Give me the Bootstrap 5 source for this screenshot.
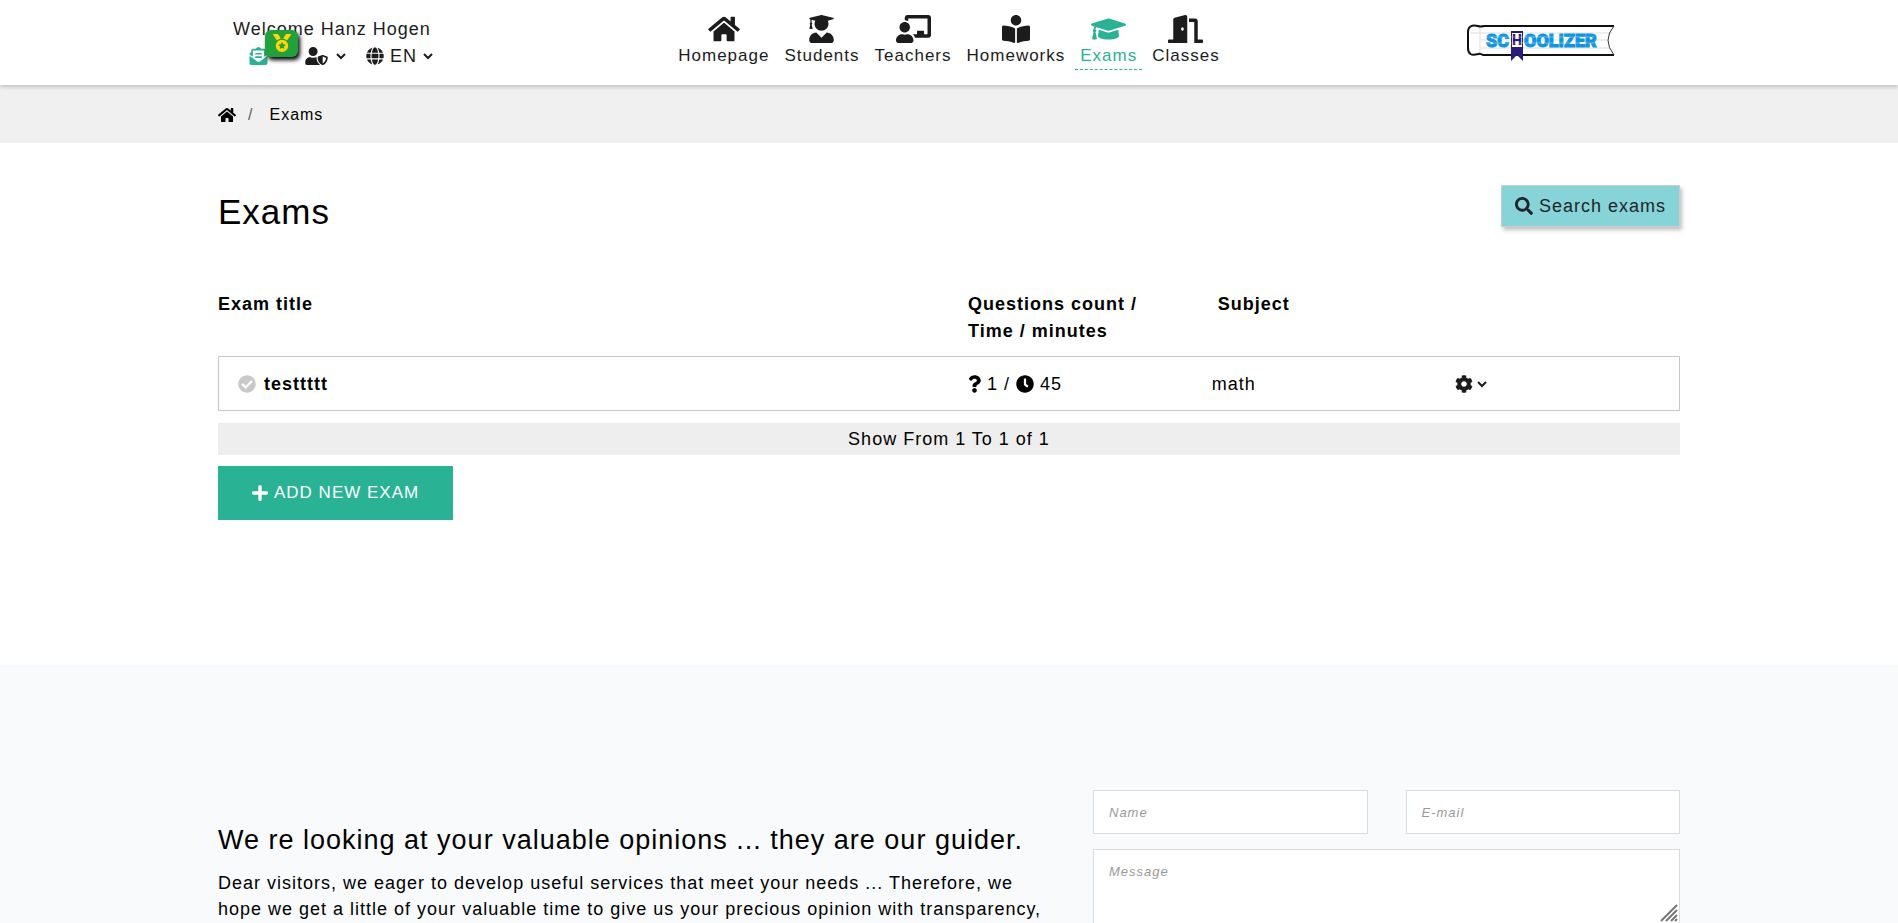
<!DOCTYPE html>
<html lang="en">
<head>
<meta charset="utf-8">
<meta name="viewport" content="width=device-width, initial-scale=1">
<title>Exams - Schoolizer</title>
<link href="https://cdn.jsdelivr.net/npm/bootstrap@5.3.0/dist/css/bootstrap.min.css" rel="stylesheet">
<style>
  :root { --brand: #29b294; --ink: #1c1c1c; }
  body { font-family: "Liberation Sans", Arial, sans-serif; font-size: 18px; line-height: 26px; letter-spacing: 1px; color: #000; background: #fff; }
  a { color: inherit; text-decoration: none; }
  .site-wrap { max-width: 1500px; padding-left: 19px; padding-right: 19px; }
  .row { --bs-gutter-x: 38px; }
  .ico { fill: currentColor; flex: none; display: block; }
  .icon-gap { gap: 6px; }
  .site-header { min-height: 85px; box-shadow: 0 2px 4px rgba(0,0,0,.2); color: var(--ink); position: relative; z-index: 2; }
  .user-box { padding: 16px 0 0 15px; }
  .tool-btn { background: none; border: 0; padding: 0; color: var(--ink); letter-spacing: inherit; height: 27px; }
  .mail-link { color: var(--brand); margin-right: 37px; }
  .medal-badge { top: -17px; left: 16px; width: 33px; height: 27px; border-radius: 6px; background: #22a03a; color: #ffd60a; box-shadow: 2px 3px 4px #000; }
  .main-nav { gap: 5px; padding-top: 15px; font-size: 17px; line-height: 26px; }
  .main-nav .nav-link { padding: 0 5px; color: var(--ink); border-bottom: 1px dashed transparent; }
  .main-nav .nav-link.active { color: var(--brand); border-color: var(--brand); }
  .logo-link { padding-right: 65px; padding-top: 23px; }
  .crumb-bar { background: #f0f0f0; padding: 17px 0 15px; font-size: 16px; }
  .crumb-bar .breadcrumb-item + .breadcrumb-item { padding-left: 12px; }
  .crumb-bar .breadcrumb-item + .breadcrumb-item::before { padding-right: 16px; }
  .page-title { font-size: 35px; line-height: 54px; }
  .search-btn { background: #87d4d8; border: 1px solid #ccc; border-radius: 0; height: 42px; padding: 0 13px; font-size: 18px; letter-spacing: inherit; box-shadow: 2px 3px 4px rgba(0,0,0,.25); }
  .exam-table { table-layout: fixed; border-collapse: separate; border-spacing: 0; margin: 52px 0 12px; }
  .exam-table th { padding: 0 0 11px; line-height: 27px; vertical-align: top; }
  .exam-table .subject-head { padding-left: 6px; }
  .exam-table td { height: 55px; border: solid #c8c8c8; border-width: 1px 0; vertical-align: middle; padding: 0; }
  .exam-table td:first-child { border-left-width: 1px; padding-left: 19px; }
  .exam-table td:last-child { border-right-width: 1px; }
  .c-title { width: 51.3%; } .c-count, .c-subject { width: 16.67%; }
  .pager-note { background: #eee; height: 32px; line-height: 32px; margin-bottom: 11px; }
  .add-btn { background: var(--brand); color: #fff; height: 54px; padding: 0 33px; border-radius: 0; font-size: 17px; letter-spacing: inherit; }
  .exam-section { padding: 42px 0 145px; }
  .feedback { background: #f8fafc; padding-top: 125px; }
  .feedback-copy { padding-top: 32px; }
  .feedback-title { font-size: 27px; line-height: 36px; margin-bottom: 12px; }
  .feedback .form-control { border: 1px solid #d8dbdf; border-radius: 0; background: #fff; font-size: 13px; line-height: 20px; height: 44px; padding: 12px 15px; letter-spacing: inherit; }
  .feedback textarea.form-control { height: 75px; resize: none; display: block; }
  .feedback .form-control::placeholder { color: #999; font-style: italic; opacity: 1; }
  .field-row { margin-bottom: 15px; }
  .grip { right: 2px; bottom: 2px; }
</style>
</head>
<body>
<svg class="d-none" aria-hidden="true">
  <symbol id="i-home" viewBox="0 0 576 512"><path d="M280.37 148.26L96 300.11V464a16 16 0 0 0 16 16l112.06-.29a16 16 0 0 0 15.92-16V368a16 16 0 0 1 16-16h64a16 16 0 0 1 16 16v95.64a16 16 0 0 0 16 16.05L464 480a16 16 0 0 0 16-16V300L295.67 148.26a12.19 12.19 0 0 0-15.3 0zM571.6 251.47L488 182.56V44.05a12 12 0 0 0-12-12h-56a12 12 0 0 0-12 12v72.61L318.47 43a48 48 0 0 0-61 0L4.34 251.47a12 12 0 0 0-1.6 16.9l25.5 31A12 12 0 0 0 45.15 301l235.22-193.74a12.19 12.19 0 0 1 15.3 0L530.9 301a12 12 0 0 0 16.9-1.6l25.5-31a12 12 0 0 0-1.7-16.93z"/></symbol>
  <symbol id="i-student" viewBox="0 0 448 512"><path d="M319.4 320.6L224 416l-95.4-95.4C57.1 323.7 0 382.2 0 454.4v9.6c0 26.5 21.5 48 48 48h352c26.5 0 48-21.5 48-48v-9.6c0-72.2-57.1-130.7-128.6-133.8zM13.6 79.8l6.4 1.5v58.4c-7 4.2-12 11.5-12 20.3 0 8.4 4.6 15.4 11.1 19.7L3.5 242c-1.7 6.9 2.1 14 7.6 14h41.8c5.5 0 9.3-7.1 7.6-14l-15.6-62.3C51.4 175.4 56 168.4 56 160c0-8.8-5-16.1-12-20.3V87.1l66 15.9c-8.6 17.2-14 36.4-14 57 0 70.7 57.3 128 128 128s128-57.3 128-128c0-20.6-5.3-39.8-14-57l96.3-23.2c18.2-4.4 18.2-27.1 0-31.5l-190.4-46c-13-3.1-26.7-3.1-39.7 0L13.6 48.2c-18.1 4.4-18.1 27.2 0 31.6z"/></symbol>
  <symbol id="i-teacher" viewBox="0 0 640 512"><path d="M208 352c-2.39 0-4.78.35-7.06 1.09C187.98 357.3 174.35 360 160 360c-14.35 0-27.98-2.7-40.95-6.91-2.28-.74-4.66-1.09-7.05-1.09C49.94 352-.33 402.48 0 464.62.14 490.88 21.73 512 48 512h224c26.27 0 47.86-21.12 48-47.38.33-62.14-49.94-112.62-112-112.62zm-48-32c53.02 0 96-42.98 96-96s-42.98-96-96-96-96 42.98-96 96 42.98 96 96 96zM592 0H208c-26.47 0-48 22.25-48 49.59V96c23.42 0 45.1 6.78 64 17.8V64h352v288h-64v-64H384v64h-76.24c19.1 16.69 33.12 38.73 39.69 64H592c26.47 0 48-22.25 48-49.59V49.59C640 22.25 618.47 0 592 0z"/></symbol>
  <symbol id="i-reader" viewBox="0 0 512 512"><path d="M352 96c0-53.02-42.98-96-96-96s-96 42.98-96 96 42.98 96 96 96 96-42.98 96-96zM233.59 241.1c-59.33-36.32-155.43-46.3-203.79-49.05C13.55 191.13 0 203.51 0 219.14v222.8c0 14.33 11.59 26.28 26.49 27.05 43.66 2.29 131.99 10.68 193.04 41.43 9.37 4.72 20.48-1.71 20.48-11.87V252.56c-.01-4.67-2.32-8.95-6.42-11.46zm248.61-49.05c-48.35 2.74-144.46 12.73-203.78 49.05-4.1 2.51-6.41 6.96-6.41 11.63v245.79c0 10.19 11.14 16.63 20.54 11.9 61.04-30.72 149.32-39.11 192.97-41.4 14.9-.78 26.49-12.73 26.49-27.06V219.14c-.01-15.63-13.56-28.01-29.81-27.09z"/></symbol>
  <symbol id="i-cap" viewBox="0 0 640 512"><path d="M622.34 153.2L343.4 67.5c-15.2-4.67-31.6-4.67-46.79 0L17.66 153.2c-23.54 7.23-23.54 38.36 0 45.59l48.63 14.94c-10.67 13.19-17.23 29.28-17.88 46.9C38.78 266.15 32 276.11 32 288c0 10.78 5.68 19.85 13.86 25.65L20.33 428.53C18.11 438.52 25.71 448 35.94 448h56.11c10.24 0 17.84-9.48 15.62-19.47L82.14 313.65C90.32 307.85 96 298.78 96 288c0-11.57-6.47-21.25-15.66-26.87.76-15.02 8.44-28.3 20.69-36.72L296.6 284.5c9.06 2.78 26.44 6.25 46.79 0l278.95-85.7c23.55-7.24 23.55-38.36 0-45.6zM352.79 315.09c-28.53 8.76-52.84 3.92-65.59 0l-145.02-44.55L128 384c0 35.35 85.96 64 192 64s192-28.65 192-64l-14.18-113.47-145.03 44.56z"/></symbol>
  <symbol id="i-door" viewBox="0 0 640 512"><path d="M624 448h-80V113.45C544 86.19 522.47 64 496 64H384v64h96v384h144c8.84 0 16-7.16 16-16v-32c0-8.84-7.16-16-16-16zM312.24 1.01l-192 49.74C105.99 54.44 96 67.7 96 82.92V448H16c-8.84 0-16 7.16-16 16v32c0 8.84 7.16 16 16 16h336V33.18c0-21.58-19.56-37.41-39.76-32.17zM264 288c-13.25 0-24-14.33-24-32s10.75-32 24-32 24 14.33 24 32-10.75 32-24 32z"/></symbol>
  <symbol id="i-mail" viewBox="0 0 512 512"><path d="M176 216h160c8.84 0 16-7.16 16-16v-16c0-8.84-7.16-16-16-16H176c-8.84 0-16 7.16-16 16v16c0 8.84 7.16 16 16 16zm-16 80c0 8.84 7.16 16 16 16h160c8.84 0 16-7.16 16-16v-16c0-8.84-7.16-16-16-16H176c-8.84 0-16 7.16-16 16v16zm96 121.13c-16.42 0-32.84-5.06-46.86-15.19L0 250.86V464c0 26.51 21.49 48 48 48h416c26.51 0 48-21.49 48-48V250.86L302.86 401.94c-14.02 10.12-30.44 15.19-46.86 15.19zm237.61-254.18c-8.85-6.94-17.24-13.47-29.61-22.81V96c0-26.51-21.49-48-48-48h-77.55c-3.04-2.2-5.87-4.26-9.04-6.56C312.6 29.17 279.2-.35 256 0c-23.2-.35-56.59 29.17-73.41 41.44-3.17 2.3-6 4.36-9.04 6.56H96c-26.51 0-48 21.49-48 48v44.14c-12.37 9.33-20.76 15.87-29.61 22.81A47.995 47.995 0 0 0 0 200.72v10.65l96 69.35V96h320v184.72l96-69.35v-10.65c0-14.74-6.78-28.67-18.39-37.77z"/></symbol>
  <symbol id="i-shield" viewBox="0 0 640 512"><path d="M622.3 271.1l-115.2-45c-4.1-1.6-12.6-3.7-22.2 0l-115.2 45c-10.7 4.2-17.7 14-17.7 24.9 0 111.6 68.7 188.8 132.9 213.9 9.6 3.7 18 1.6 22.2 0C558.4 489.9 640 420.5 640 296c0-10.9-7-20.7-17.7-24.9zM496 462.4V273.3l95.5 37.3c-5.6 87.1-60.9 135.4-95.5 151.8zM224 256c70.7 0 128-57.3 128-128S294.7 0 224 0 96 57.3 96 128s57.3 128 128 128zm96 40c0-2.5.8-4.8 1.1-7.2-2.5-.1-4.9-.8-7.5-.8h-16.7c-22.2 10.2-46.9 16-72.9 16s-50.6-5.8-72.9-16h-16.7C60.2 288 0 348.2 0 422.4V464c0 26.5 21.5 48 48 48h352c6.8 0 13.3-1.5 19.2-4-54-42.9-99.2-116.7-99.2-212z"/></symbol>
  <symbol id="i-globe" viewBox="0 0 496 512"><path d="M336.5 160C322 70.7 287.8 8 248 8s-74 62.7-88.5 152h177zM152 256c0 22.2 1.2 43.5 3.3 64h185.3c2.1-20.5 3.3-41.8 3.3-64s-1.2-43.5-3.3-64H155.3c-2.1 20.5-3.3 41.8-3.3 64zm324.7-96c-28.6-67.9-86.5-120.4-158-141.6 24.4 33.8 41.2 84.7 50 141.6h108zM177.2 18.4C105.8 39.6 47.8 92.1 19.3 160h108c8.7-56.9 25.5-107.8 49.9-141.6zM487.4 192H372.7c2.1 21 3.3 42.5 3.3 64s-1.2 43-3.3 64h114.6c5.5-20.5 8.6-41.8 8.6-64s-3.1-43.5-8.5-64zM120 256c0-21.5 1.2-43 3.3-64H8.6C3.2 212.5 0 233.8 0 256s3.2 43.5 8.6 64h114.6c-2-21-3.2-42.5-3.2-64zm39.5 96c14.5 89.3 48.7 152 88.5 152s74-62.7 88.5-152h-177zm159.3 141.6c71.4-21.2 129.4-73.7 158-141.6h-108c-8.8 56.9-25.6 107.8-50 141.6zM19.3 352c28.6 67.9 86.5 120.4 158 141.6-24.4-33.8-41.2-84.7-50-141.6h-108z"/></symbol>
  <symbol id="i-medal" viewBox="0 0 512 512"><path d="M223.75 130.75L154.62 15.54A31.997 31.997 0 0 0 127.18 0H16.03C3.08 0-4.5 14.57 2.92 25.18l111.27 158.96c29.72-27.77 67.52-46.83 109.56-53.39zM495.97 0H384.82c-11.24 0-21.66 5.9-27.44 15.54l-69.13 115.21c42.04 6.56 79.84 25.62 109.56 53.38L509.08 25.18C516.5 14.57 508.92 0 495.97 0zM256 160c-97.2 0-176 78.8-176 176s78.8 176 176 176 176-78.8 176-176-78.8-176-176-176zm92.52 157.26l-37.93 36.96 8.97 52.22c1.6 9.36-8.26 16.51-16.65 12.09L256 393.88l-46.9 24.65c-8.4 4.45-18.25-2.74-16.65-12.09l8.97-52.22-37.93-36.96c-6.82-6.64-3.05-18.23 6.35-19.59l52.43-7.64 23.43-47.52c2.11-4.28 6.19-6.39 10.28-6.39 4.11 0 8.22 2.14 10.33 6.39l23.43 47.52 52.43 7.64c9.4 1.36 13.17 12.95 6.35 19.59z"/></symbol>
  <symbol id="i-search" viewBox="0 0 512 512"><path d="M505 442.7L405.3 343c-4.5-4.5-10.6-7-17-7H372c27.6-35.3 44-79.7 44-128C416 93.1 322.9 0 208 0S0 93.1 0 208s93.1 208 208 208c48.3 0 92.7-16.4 128-44v16.3c0 6.4 2.5 12.5 7 17l99.7 99.7c9.4 9.4 24.6 9.4 33.9 0l28.3-28.3c9.4-9.4 9.4-24.6.1-34zM208 336c-70.7 0-128-57.2-128-128 0-70.7 57.2-128 128-128 70.7 0 128 57.2 128 128 0 70.7-57.2 128-128 128z"/></symbol>
  <symbol id="i-check" viewBox="0 0 512 512"><path d="M504 256c0 136.967-111.033 248-248 248S8 392.967 8 256 119.033 8 256 8s248 111.033 248 248zM227.314 387.314l184-184c6.248-6.248 6.248-16.379 0-22.627l-22.627-22.627c-6.248-6.249-16.379-6.249-22.628 0L216 308.118l-70.059-70.059c-6.248-6.248-16.379-6.248-22.628 0l-22.627 22.627c-6.248 6.248-6.248 16.379 0 22.627l104 104c6.249 6.249 16.379 6.249 22.628.001z"/></symbol>
  <symbol id="i-question" viewBox="0 0 384 512"><path d="M202.021 0C122.202 0 70.503 32.703 29.914 91.026c-7.363 10.58-5.093 25.086 5.178 32.874l43.138 32.709c10.373 7.865 25.132 6.026 33.253-4.148 25.049-31.381 43.63-49.449 82.757-49.449 30.764 0 68.816 19.799 68.816 49.631 0 22.552-18.617 34.134-48.993 51.164-35.423 19.86-82.299 44.576-82.299 106.405V320c0 13.255 10.745 24 24 24h72.471c13.255 0 24-10.745 24-24v-5.773c0-42.86 125.268-44.645 125.268-160.627C377.504 66.256 286.902 0 202.021 0zM192 373.459c-38.196 0-69.271 31.075-69.271 69.271 0 38.195 31.075 69.27 69.271 69.27s69.271-31.075 69.271-69.271-31.075-69.27-69.271-69.27z"/></symbol>
  <symbol id="i-clock" viewBox="0 0 512 512"><path d="M256,8C119,8,8,119,8,256S119,504,256,504,504,393,504,256,393,8,256,8Zm92.49,313h0l-20,25a16,16,0,0,1-22.49,2.5h0l-67-49.72a40,40,0,0,1-15-31.23V112a16,16,0,0,1,16-16h32a16,16,0,0,1,16,16V256l58,42.5A16,16,0,0,1,348.49,321Z"/></symbol>
  <symbol id="i-cog" viewBox="0 0 512 512"><path d="M487.4 315.7l-42.6-24.6c4.3-23.2 4.3-47 0-70.2l42.6-24.6c4.9-2.8 7.1-8.6 5.5-14-11.1-35.6-30-67.8-54.7-94.6-3.8-4.1-10-5.1-14.8-2.3L380.8 110c-17.9-15.4-38.5-27.3-60.8-35.1V25.8c0-5.6-3.9-10.5-9.4-11.7-36.7-8.2-74.3-7.8-109.2 0-5.5 1.2-9.4 6.1-9.4 11.7V75c-22.2 7.9-42.8 19.8-60.8 35.1L88.7 85.5c-4.9-2.8-11-1.9-14.8 2.3-24.7 26.7-43.6 58.9-54.7 94.6-1.7 5.4.6 11.2 5.5 14L67.3 221c-4.3 23.2-4.3 47 0 70.2l-42.6 24.6c-4.9 2.8-7.1 8.6-5.5 14 11.1 35.6 30 67.8 54.7 94.6 3.8 4.1 10 5.1 14.8 2.3l42.6-24.6c17.9 15.4 38.5 27.3 60.8 35.1v49.2c0 5.6 3.9 10.5 9.4 11.7 36.7 8.2 74.3 7.8 109.2 0 5.5-1.2 9.4-6.1 9.4-11.7v-49.2c22.2-7.9 42.8-19.8 60.8-35.1l42.6 24.6c4.9 2.8 11 1.9 14.8-2.3 24.7-26.7 43.6-58.9 54.7-94.6 1.5-5.5-.7-11.3-5.6-14.1zM256 336c-44.1 0-80-35.9-80-80s35.9-80 80-80 80 35.9 80 80-35.9 80-80 80z"/></symbol>
  <symbol id="i-plus" viewBox="0 0 448 512"><path d="M416 208H272V64c0-17.67-14.33-32-32-32h-32c-17.67 0-32 14.33-32 32v144H32c-17.67 0-32 14.33-32 32v32c0 17.67 14.33 32 32 32h144v144c0 17.67 14.33 32 32 32h32c17.67 0 32-14.33 32-32V304h144c17.67 0 32-14.33 32-32v-32c0-17.67-14.33-32-32-32z"/></symbol>
  <symbol id="i-chev" viewBox="0 0 10 8"><path d="M1 2l4 4 4-4" fill="none" stroke="currentColor" stroke-width="2"/></symbol>
</svg>

<header class="site-header bg-white">
  <div class="container-fluid site-wrap">
    <div class="row">
      <div class="col-lg-3">
        <div class="user-box">
          <div>Welcome Hanz Hogen</div>
          <div class="d-flex align-items-center ps-3">
            <a href="#" class="mail-link position-relative" aria-label="Messages">
              <svg class="ico" width="19" height="18"><use href="#i-mail"/></svg>
              <span class="medal-badge position-absolute d-flex align-items-center justify-content-center"><svg class="ico" width="18" height="18"><use href="#i-medal"/></svg></span>
            </a>
            <button type="button" class="tool-btn d-flex align-items-center gap-2" aria-label="Account">
              <svg class="ico" width="23" height="18"><use href="#i-shield"/></svg>
              <svg class="ico" width="10" height="8"><use href="#i-chev"/></svg>
            </button>
            <button type="button" class="tool-btn d-flex align-items-center icon-gap ms-3 ps-1" aria-label="Language">
              <svg class="ico" width="18" height="18"><use href="#i-globe"/></svg>
              <span>EN</span>
              <svg class="ico" width="10" height="8"><use href="#i-chev"/></svg>
            </button>
          </div>
        </div>
      </div>
      <div class="col-lg-6">
        <nav class="nav main-nav justify-content-center flex-lg-nowrap">
          <a class="nav-link d-flex flex-column align-items-center" href="#"><svg class="ico" width="32" height="28"><use href="#i-home"/></svg>Homepage</a>
          <a class="nav-link d-flex flex-column align-items-center" href="#"><svg class="ico" width="25" height="28"><use href="#i-student"/></svg>Students</a>
          <a class="nav-link d-flex flex-column align-items-center" href="#"><svg class="ico" width="35" height="28"><use href="#i-teacher"/></svg>Teachers</a>
          <a class="nav-link d-flex flex-column align-items-center" href="#"><svg class="ico" width="28" height="28"><use href="#i-reader"/></svg>Homeworks</a>
          <a class="nav-link active d-flex flex-column align-items-center" href="#" aria-current="page"><svg class="ico" width="35" height="28"><use href="#i-cap"/></svg>Exams</a>
          <a class="nav-link d-flex flex-column align-items-center" href="#"><svg class="ico" width="35" height="28"><use href="#i-door"/></svg>Classes</a>
        </nav>
      </div>
      <div class="col-lg-3">
        <a class="logo-link d-flex justify-content-end" href="#" aria-label="Schoolizer">
          <svg width="148" height="40" viewBox="0 0 148 40">
            <path d="M12 3H147Q135 17 147 32H12" fill="#fff"/>
            <path d="M3 10H145M14 17H141M14 25H143M13 4V31" stroke="#ddd" fill="none"/>
            <path d="M147 3H17Q13 4 11 3Q1 1 1 9V25Q1 34 11 31Q13 30 16 32H147" fill="none" stroke="#111" stroke-width="2"/>
            <path d="M147 3Q135 17 147 32" fill="none" stroke="#333"/>
            <g font-family="Roboto, sans-serif" font-weight="900" letter-spacing="0" fill="#1095df">
              <text x="19" y="24" font-size="18" stroke="#1095df">SC</text>
              <path d="M44 8H56V38L50 32L44 38Z" fill="#2a1a7a"/>
              <path d="M45 10H55V24H45Z" fill="#fff"/>
              <text x="50" y="22" font-size="14" text-anchor="middle" fill="#2a1a7a">H</text>
              <text x="57" y="24" font-size="18" stroke="#1095df">OOLIZER</text>
            </g>
            <path d="M19 14H127M19 20H127" stroke="#fff" stroke-opacity=".35"/>
          </svg>
        </a>
      </div>
    </div>
  </div>
</header>

<div class="crumb-bar">
  <nav class="container-fluid site-wrap" aria-label="breadcrumb">
    <ol class="breadcrumb align-items-center mb-0">
      <li class="breadcrumb-item"><a href="#" aria-label="Home"><svg class="ico" width="18" height="16"><use href="#i-home"/></svg></a></li>
      <li class="breadcrumb-item">Exams</li>
    </ol>
  </nav>
</div>

<main class="exam-section">
  <div class="container-fluid site-wrap">
    <div class="d-flex justify-content-between align-items-start">
      <h1 class="page-title fw-normal mb-0">Exams</h1>
      <button type="button" class="btn search-btn d-flex align-items-center icon-gap"><svg class="ico" width="18" height="18"><use href="#i-search"/></svg>Search exams</button>
    </div>
    <table class="exam-table w-100">
      <colgroup><col class="c-title"><col class="c-count"><col class="c-subject"><col></colgroup>
      <thead>
        <tr><th scope="col">Exam title</th><th scope="col">Questions count /<br>Time / minutes</th><th scope="col" class="subject-head">Subject</th><td class="border-0"></td></tr>
      </thead>
      <tbody>
        <tr>
          <td><a href="#" class="d-flex align-items-center gap-2 fw-bold"><svg class="ico" width="18" height="18" color="#c9c9c9"><use href="#i-check"/></svg>testtttt</a></td>
          <td><div class="d-flex align-items-center icon-gap"><svg class="ico" width="13" height="18"><use href="#i-question"/></svg><span>1 /</span><svg class="ico" width="18" height="18"><use href="#i-clock"/></svg><span>45</span></div></td>
          <td>math</td>
          <td><button type="button" class="tool-btn d-flex align-items-center gap-1" aria-label="Options"><svg class="ico" width="18" height="18"><use href="#i-cog"/></svg><svg class="ico" width="10" height="8"><use href="#i-chev"/></svg></button></td>
        </tr>
      </tbody>
    </table>
    <div class="pager-note text-center">Show From 1 To 1 of 1</div>
    <button type="button" class="btn add-btn d-flex align-items-center icon-gap"><svg class="ico" width="16" height="18"><use href="#i-plus"/></svg>ADD NEW EXAM</button>
  </div>
</main>

<section class="feedback">
  <div class="container-fluid site-wrap">
    <div class="row">
      <div class="col-lg-7 feedback-copy">
        <h2 class="feedback-title fw-normal">We re looking at your valuable opinions ... they are our guider.</h2>
        <p class="mb-0">Dear visitors, we eager to develop useful services that meet your needs ... Therefore, we hope we get a little of your valuable time to give us your precious opinion with transparency,</p>
      </div>
      <form class="col-lg-5">
        <div class="row field-row">
          <div class="col-6"><input class="form-control" type="text" placeholder="Name" aria-label="Name"></div>
          <div class="col-6"><input class="form-control" type="email" placeholder="E-mail" aria-label="E-mail"></div>
        </div>
        <div class="position-relative">
          <textarea class="form-control" placeholder="Message" aria-label="Message"></textarea>
          <svg class="grip position-absolute" width="18" height="18" viewBox="0 0 18 18" stroke="#777" stroke-width="2" aria-hidden="true"><path d="M1 17L17 1M6 17L17 6M11 17L17 11M15 17L17 15"/></svg>
        </div>
      </form>
    </div>
  </div>
</section>
<script src="https://cdn.jsdelivr.net/npm/bootstrap@5.3.0/dist/js/bootstrap.bundle.min.js"></script>
</body>
</html>
